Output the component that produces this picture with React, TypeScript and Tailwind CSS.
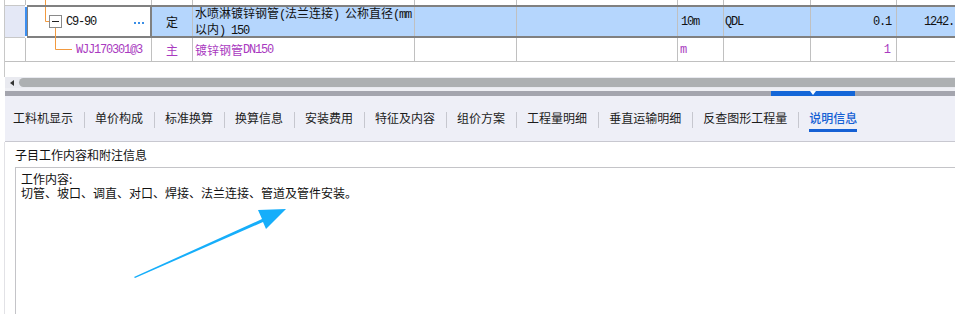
import React from "react";

const line = "shrink-0 border-r border-[#c0c0c0]";
const mono = { fontFamily: '"Liberation Mono", "Noto Sans CJK SC", monospace' } as React.CSSProperties;

function Tab({ label, active, last }: { label: string; active?: boolean; last?: boolean }) {
  return (
    <div className="flex items-center h-full">
      <div className="relative h-full flex items-center ml-[10px] mr-[11px]">
        <span className={active ? "text-[#1560d4] font-medium" : "text-[#1c1c1c]"}>{label}</span>
        {active && <div className="absolute left-0 right-0 top-[33px] h-[3px] bg-[#1560d4]" />}
      </div>
      {!last && <div className="w-px h-[16px] bg-[#c6c7cf] mt-[4px]" />}
    </div>
  );
}

export default function App() {
  const tabs = ["工料机显示", "单价构成", "标准换算", "换算信息", "安装费用", "特征及内容", "组价方案", "工程量明细", "垂直运输明细", "反查图形工程量"];
  return (
    <div
      className="relative w-[955px] h-[314px] overflow-hidden bg-white text-[12px] text-[#111]"
      style={{ fontFamily: '"Noto Sans CJK SC", "Liberation Sans", sans-serif' }}
    >
      {/* grid */}
      <div className="relative ml-[4px] border-l border-[#c8c8c8]">
        {/* partial row */}
        <div className="flex h-[5px]">
          <div className={`w-[21px] ${line}`} />
          <div className={`w-[126px] ${line}`} />
          <div className={`w-[41px] ${line}`} />
          <div className={`w-[222px] ${line}`} />
          <div className={`w-[102px] ${line}`} />
          <div className={`w-[161px] ${line}`} />
          <div className={`w-[46px] ${line}`} />
          <div className={`w-[87px] ${line}`} />
          <div className={`w-[86px] ${line}`} />
          <div className="flex-1 min-w-0" />
        </div>
        {/* selected row */}
        <div className="flex h-[33px]">
          <div className="shrink-0 w-[20px] bg-[#e4e8f6] border-y border-[#c8c8c8]" />
          <div className="shrink-0 w-[2px] my-[2px] bg-[#3b8ef0]" />
          <div className="flex-1 min-w-0 flex border-y-2 border-[#808080] bg-[#b5d6fd]">
            <div className="shrink-0 w-[125px] bg-white border-l border-r-2 border-[#808080] flex items-center">
              <span className="ml-[38px] tracking-[-1.2px]" style={mono}>C9-90</span>
              <div className="ml-auto mr-[6px] flex gap-[2px] mt-[2px]">
                <div className="w-[2px] h-[2px] bg-[#3a8ee6]" />
                <div className="w-[2px] h-[2px] bg-[#3a8ee6]" />
                <div className="w-[2px] h-[2px] bg-[#3a8ee6]" />
              </div>
            </div>
            <div className={`w-[41px] ${line} flex items-center justify-center`}>定</div>
            <div className={`w-[222px] ${line} pl-[2px] flex flex-col justify-center leading-[13px] whitespace-nowrap`}>
              <div>水喷淋镀锌钢管<span style={mono} className="tracking-[-1.2px]">(</span>法兰连接<span style={mono} className="tracking-[-1.2px]">) </span>公称直径<span style={mono} className="tracking-[-1.2px]">(mm</span></div>
              <div>以内<span style={mono} className="tracking-[-1.2px]">) 150</span></div>
            </div>
            <div className={`w-[102px] ${line}`} />
            <div className={`w-[161px] ${line}`} />
            <div className={`w-[46px] ${line} flex items-center pl-[3px] tracking-[-1.2px]`} style={mono}>10m</div>
            <div className={`w-[87px] ${line} flex items-center pl-[1px] tracking-[-1.2px]`} style={mono}>QDL</div>
            <div className={`w-[86px] ${line} flex items-center justify-end pr-[5px] tracking-[-1.2px]`} style={mono}>0.1</div>
            <div className="flex-1 min-w-0 flex items-center pl-[27px] whitespace-nowrap overflow-hidden tracking-[-1.2px]" style={mono}>1242.</div>
          </div>
        </div>
        {/* row 2 */}
        <div className="flex h-[24px] border-b border-[#c0c0c0] text-[#a93ac0]">
          <div className={`w-[21px] ${line}`} />
          <div className={`w-[126px] ${line} flex items-center`}>
            <span className="ml-[50px] tracking-[-1.2px]" style={mono}>WJJ170301@3</span>
          </div>
          <div className={`w-[41px] ${line} flex items-center justify-center`}>主</div>
          <div className={`w-[222px] ${line} pl-[2px] flex items-center`}>
            镀锌钢管<span style={mono} className="tracking-[-1.2px]">DN150</span>
          </div>
          <div className={`w-[102px] ${line}`} />
          <div className={`w-[161px] ${line}`} />
          <div className={`w-[46px] ${line} flex items-center pl-[2px]`} style={mono}>m</div>
          <div className={`w-[87px] ${line}`} />
          <div className={`w-[86px] ${line} flex items-center justify-end pr-[5px]`} style={mono}>1</div>
          <div className="flex-1 min-w-0" />
        </div>
        {/* tree lines drawing */}
        <svg className="absolute left-[-5px] top-0" width="80" height="62" viewBox="0 0 80 62">
          <path d="M45.5 0 V5 M45.5 7 V21.5 H49" stroke="#f29a3f" strokeWidth="1" fill="none" />
          <path d="M55.5 28 V49.5 H72" stroke="#f29a3f" strokeWidth="1" fill="none" />
          <rect x="49.5" y="15.5" width="12" height="12" fill="white" stroke="#8a8a8a" strokeWidth="1" />
          <path d="M52 21.5 H59" stroke="#222" strokeWidth="1" />
        </svg>
        <div className="h-[15px]" />
      </div>

      {/* scrollbar */}
      <div className="ml-[5px] h-[11px] bg-[#e9eaf0] flex items-center">
        <div className="ml-[5px] w-0 h-0 border-y-[3px] border-y-transparent border-r-[4px] border-r-[#333]" />
        <div className="ml-[5px] flex-1 h-[9px] rounded-l-full bg-[#adb0b2]" />
      </div>
      <div className="ml-[5px] h-[3px] bg-[#eeeff4]" />
      {/* splitter */}
      <div className="ml-[5px] h-[5px] bg-[#a4a5ae] relative">
        <div className="absolute left-[766px] w-[84px] top-0 h-[5px] bg-[#1466d8] flex justify-center items-start">
          <div className="w-0 h-0 border-x-[3px] border-x-transparent border-t-[4px] border-t-white" />
        </div>
      </div>

      {/* tabs */}
      <div className="ml-[5px] h-[46px] bg-[#eeeff7] border-b border-[#c8c8d0] flex items-stretch pb-[2px]">
        <div className="flex h-full -ml-[2px]">
          {tabs.map((t) => (
            <Tab key={t} label={t} />
          ))}
          <Tab label="说明信息" active last />
        </div>
      </div>

      {/* bottom panel */}
      <div className="ml-[4px] border-l border-[#e2e2e6] h-[200px]">
        <div className="h-[25px] pl-[10px] flex items-center pt-[1px]">子目工作内容和附注信息</div>
        <div className="ml-[10px] border-t border-l border-[#c4c4c8] h-[200px] pl-[5px] pt-[4px] leading-[14px]">
          <div>工作内容:</div>
          <div>切管、坡口、调直、对口、焊接、法兰连接、管道及管件安装。</div>
        </div>
      </div>

      {/* arrow annotation */}
      <svg className="absolute left-0 top-0 pointer-events-none" width="955" height="314" viewBox="0 0 955 314">
        <polygon points="134,277 262,219 258,210 286,209 266,229 263,222 135,278" fill="#16aefa" />
      </svg>
    </div>
  );
}
